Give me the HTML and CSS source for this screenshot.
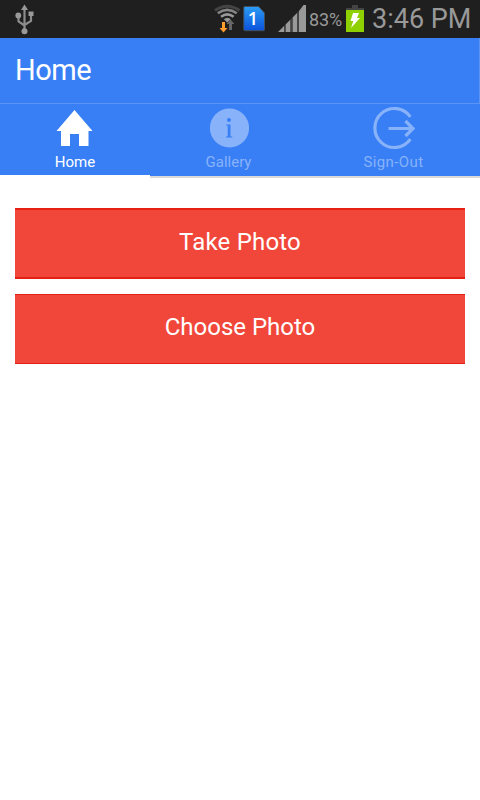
FILE: index.html
```html
<!DOCTYPE html>
<html lang="en">
<head>
<meta charset="utf-8">
<title>Home</title>
<link rel="stylesheet" href="styles.css">
</head>
<body>
<div class="status">
  <svg class="usb" width="20" height="38" viewBox="0 0 20 38" fill="none" stroke="#8c8c8c" stroke-width="2.200">
    <path d="M9.500 8V30M3.500 16v5.500l6 4M16 15v6l-6.500 4"/>
    <path d="M9.500 4.500l3.500 5.500H6zM13.500 11.500h5v4.500h-5z" fill="#999" stroke="none"/>
    <circle cx="3.300" cy="15.500" r="2.900" fill="#999" stroke="none"/>
    <circle cx="9.500" cy="31.200" r="3" fill="#999" stroke="none"/>
  </svg>
  <svg class="wifi" width="27" height="38" viewBox="0 0 27 38" fill="none">
    <path d="M1 10.500Q13 2 25.500 10.500" stroke="#444" stroke-width="3"/>
    <path d="M3.800 13.300Q13.300 6.500 22.800 13.300" stroke="#858585" stroke-width="2.600"/>
    <path d="M7 16.800Q13.300 12 19.600 16.800" stroke="#999" stroke-width="2.600"/>
    <path d="M9.800 19.300q3.500-3 7 0L13.300 22.500z" fill="#999"/>
    <path d="M8 22h3v6h2.500l-4 4.500-4-4.500H8z" fill="#ff9d2e"/>
    <path d="M15 30v-6h-2.500l4-4.500 4 4.500H18v6z" fill="#666"/>
  </svg>
  <svg class="sim" width="23" height="38" viewBox="0 0 23 38">
    <defs><linearGradient id="g" x2="0" y2="1"><stop stop-color="#2b9cf5"/><stop offset="1" stop-color="#0b52dc"/></linearGradient></defs>
    <path d="M2 6.500h13.500L21.500 13v16.500q0 1.200-1.200 1.200H2q-1.200 0-1.200-1.200V7.700q0-1.200 1.200-1.200z" fill="url(#g)" stroke="#42505e"/>
    <text x="9.800" y="25" text-anchor="middle" class="sim-number">1</text>
  </svg>
  <svg class="signal" width="28" height="38" viewBox="0 0 28 38" fill="#999">
    <path d="M0 32l6-6v6zM7.500 24.500l5-5V32h-5zM14.500 17.500l4.500-4.500v19h-4.500zM21 11l4.500-6H28v27h-7z"/>
    <path d="M6 26l1.500-1.500V32H6zM12.500 19.500l2-2V32h-2zM19 13l2-2v21h-2z" fill="#444"/>
  </svg>
  <span class="percent">83%</span>
  <svg class="battery" width="18" height="38" viewBox="0 0 18 38">
    <path d="M6 5h6v3h6v2H0V8h6z" fill="#444"/>
    <path d="M0 10h18v22H0z" fill="#8fd000"/>
    <path d="M7 13h6l-2 5h3L5 28l2.300-7H4.500z" fill="#fff"/>
  </svg>
  <span class="clock">3:46 PM</span>
</div>
<header class="title"><h1>Home</h1></header>
<nav class="tabs">
  <a class="tab active">
    <svg width="48" height="48" viewBox="0 0 48 48"><path d="M23.500 6L41.500 27H37.500v15H28V30h-9v12H10V27H5.500z" fill="#fff"/></svg>
    <span>Home</span>
  </a>
  <a class="tab">
    <svg width="48" height="48" viewBox="0 0 48 48"><circle cx="24.500" cy="24" r="19.600" fill="#88b2fa"/><circle cx="24" cy="16" r="2" fill="#387ff5"/><path d="M21.200 20.500h4.300v12h1.700v1h-6.200v-1h1.700v-11h-1.500z" fill="#387ff5"/></svg>
    <span>Gallery</span>
  </a>
  <a class="tab">
    <svg width="48" height="48" viewBox="0 0 48 48" fill="none" stroke="#88b2fa" stroke-width="3.200"><path d="M40.400 12.900A19.500 19.500 0 1 0 40.400 35.100M18.500 24.500H43"/><path d="M35.500 17L43 24.500 35.500 32"/></svg>
    <span class="wide">Sign-Out</span>
  </a>
</nav>
<main class="content">
  <button class="button pressed take">Take Photo</button>
  <button class="button">Choose Photo</button>
</main>
</body>
</html>
```

FILE: styles.css
```css
* { box-sizing: border-box; }
body { margin: 0; width: 480px; height: 800px; overflow: hidden; background: #fff; font-family: Roboto, sans-serif; }
svg { display: block; flex: none; }
.status { display: flex; height: 38px; background: #1f1f1f; color: #999; line-height: 38px; white-space: nowrap; }
.usb { margin-left: 15px; }
.wifi { margin-left: 179px; }
.sim { margin-left: 2px; }
.sim-number { font: 600 18px "Open Sans", sans-serif; fill: #fff; }
.signal { margin-left: 12px; }
.percent { width: 38px; padding-left: 3px; font-size: 18px; line-height: 40px; letter-spacing: -0.1px; }
.battery { margin-left: 2px; }
.clock { margin-left: 8px; font-size: 27px; }
.title { height: 66px; padding-left: 15px; background: #387ff5; border: solid #5a95f6; border-width: 0 1px 1px 0; color: #fff; }
.title h1 { margin: 0; font-size: 29px; font-weight: 400; line-height: 64px; letter-spacing: -0.5px; }
.tabs { display: grid; grid-template-columns: 150px 157px 173px; height: 74px; }
.tab { display: flex; flex-direction: column; align-items: center; background: #387ff5; border-bottom: 2px solid #dadada; color: #88b2fa; font-size: 15px; line-height: 20px; }
.tab.active { color: #fff; border-bottom: 3px solid #fff; }
.wide { letter-spacing: 0.4px; }
.content { display: flex; flex-direction: column; gap: 15px; padding: 30px 15px; }
.button { height: 70px; padding: 0 0 4px; border: solid #e42112; border-width: 1px 0; background: #f1473a; color: #fff; font: 24px Roboto, sans-serif; }
.button.pressed { height: 71px; border-width: 2px 0; }
.take { letter-spacing: 0.2px; }
```
